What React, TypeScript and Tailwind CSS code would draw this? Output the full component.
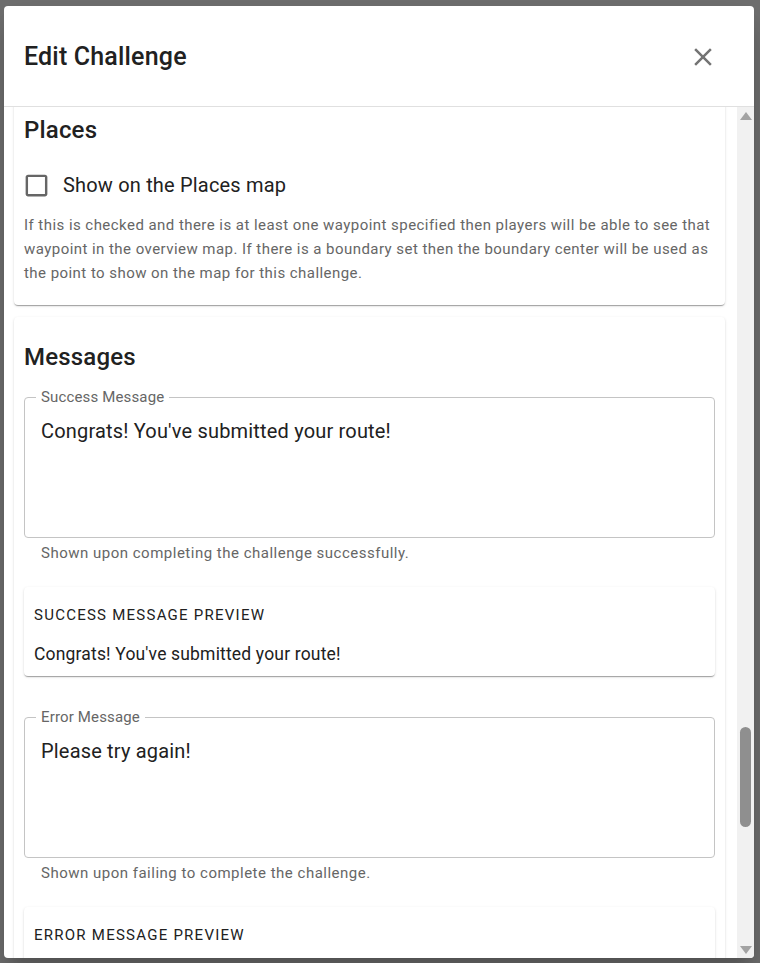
import React from "react";

const cardShadow =
  "shadow-[0px_2px_1px_-1px_rgba(0,0,0,0.2),0px_1px_1px_0px_rgba(0,0,0,0.14),0px_1px_3px_0px_rgba(0,0,0,0.12)]";

interface MessageFieldProps {
  label: string;
  value: string;
  helper: string;
}

const MessageField: React.FC<MessageFieldProps> = ({ label, value, helper }) => {
  return (
    <div className="flex flex-col">
      <div className="relative h-[141px] rounded-[4px] border border-[#c4c4c4] pl-[16px] pt-[21px]">
        <span className="absolute left-[11px] top-[-10px] bg-white px-[5px] text-[15px] leading-[18px] tracking-[0.15px] text-[#666666]">
          {label}
        </span>
        <div className="text-[20px] leading-[24px] tracking-[0.18px] text-[#212121]">{value}</div>
      </div>
      <div className="ml-[17px] mt-[3px] text-[15px] leading-[24px] tracking-[0.5px] text-[#666666]">{helper}</div>
    </div>
  );
};

const PreviewCard: React.FC<{ title: string; body: string }> = ({ title, body }) => {
  return (
    <div className={`rounded-[4px] bg-white px-[10px] pt-[18px] pb-[10px] ${cardShadow}`}>
      <div className="text-[15px] uppercase leading-[20px] tracking-[1.25px] text-[#212121]">{title}</div>
      <div className="mt-[17px] text-[17.5px] leading-[24px] tracking-[0.17px] text-[#212121]">{body}</div>
    </div>
  );
};

export default function App() {
  return (
    <div className="h-[963px] w-[760px] overflow-hidden bg-[#6e6e6e] pl-[4px] pt-[6px] font-['Roboto',sans-serif]">
      <div className="flex h-[952px] w-[750px] flex-col overflow-hidden rounded-[4px] bg-white shadow-[0px_11px_15px_-7px_rgba(0,0,0,0.2),0px_24px_38px_3px_rgba(0,0,0,0.14)]">
        {/* header */}
        <div className="flex h-[101px] shrink-0 items-center justify-between border-b border-[#e0e0e0] pl-[20px] pr-[36px] pt-[2px]">
          <div className="text-[25px] font-medium leading-[38px] tracking-[0.18px] text-[#212121]">Edit Challenge</div>
          <svg width="30" height="30" viewBox="0 0 24 24" fill="#757575">
            <path d="M19 6.41 17.59 5 12 10.59 6.41 5 5 6.41 10.59 12 5 17.59 6.41 19 12 13.41 17.59 19 19 17.59 13.41 12z" />
          </svg>
        </div>

        {/* body */}
        <div className="flex min-h-0 flex-1">
          <div className="min-w-0 flex-1 overflow-hidden pl-[10px] pr-[12px]">
            <div className="-mt-[17px] flex flex-col gap-[12px]">
              {/* Places */}
              <div className={`rounded-[4px] bg-white px-[10px] pt-[21px] pb-[20px] ${cardShadow}`}>
                <div className="text-[24px] font-medium leading-[38px] tracking-[0.18px] text-[#212121]">Places</div>
                <div className="mt-[14px] flex h-[44px] items-center">
                  <svg width="29" height="29" viewBox="0 0 24 24" fill="#666666" className="-ml-[2px]">
                    <path d="M19 5v14H5V5h14m0-2H5c-1.11 0-2 .9-2 2v14c0 1.1.89 2 2 2h14c1.1 0 2-.9 2-2V5c0-1.1-.9-2-2-2z" />
                  </svg>
                  <span className="ml-[12px] text-[20px] tracking-[0.18px] text-[#212121]">Show on the Places map</span>
                </div>
                <p className="-mr-[6px] mt-[6px] text-[15px] leading-[24px] tracking-[0.45px] text-[#666666]">
                  If this is checked and there is at least one waypoint specified then players will be able to see that
                  waypoint in the overview map. If there is a boundary set then the boundary center will be used as
                  the point to show on the map for this challenge.
                </p>
              </div>

              {/* Messages */}
              <div className={`rounded-[4px] bg-white px-[10px] pt-[21px] pb-[20px] ${cardShadow}`}>
                <div className="text-[24px] font-medium leading-[38px] tracking-[0.18px] text-[#212121]">Messages</div>
                <div className="mt-[21px]">
                  <MessageField
                    label="Success Message"
                    value="Congrats! You've submitted your route!"
                    helper="Shown upon completing the challenge successfully."
                  />
                </div>
                <div className="mt-[22px]">
                  <PreviewCard title="Success message preview" body="Congrats! You've submitted your route!" />
                </div>
                <div className="mt-[41px]">
                  <MessageField
                    label="Error Message"
                    value="Please try again!"
                    helper="Shown upon failing to complete the challenge."
                  />
                </div>
                <div className="mt-[22px]">
                  <PreviewCard title="Error message preview" body="Please try again!" />
                </div>
              </div>
            </div>
          </div>

          {/* scrollbar */}
          <div className="flex w-[17px] shrink-0 flex-col bg-[#f1f1f1]">
            <div className="flex h-[17px] items-center justify-center">
              <svg width="12" height="8" viewBox="0 0 12 8" fill="#a3a3a3">
                <path d="M6 0 12 8H0z" />
              </svg>
            </div>
            <div className="flex flex-1 flex-col pt-[603px]">
              <div className="mx-auto h-[100px] w-[11px] rounded-full bg-[#8f8f8f]" />
            </div>
            <div className="flex h-[17px] items-center justify-center">
              <svg width="12" height="8" viewBox="0 0 12 8" fill="#a3a3a3">
                <path d="M0 0h12L6 8z" />
              </svg>
            </div>
          </div>
        </div>
      </div>
    </div>
  );
}
